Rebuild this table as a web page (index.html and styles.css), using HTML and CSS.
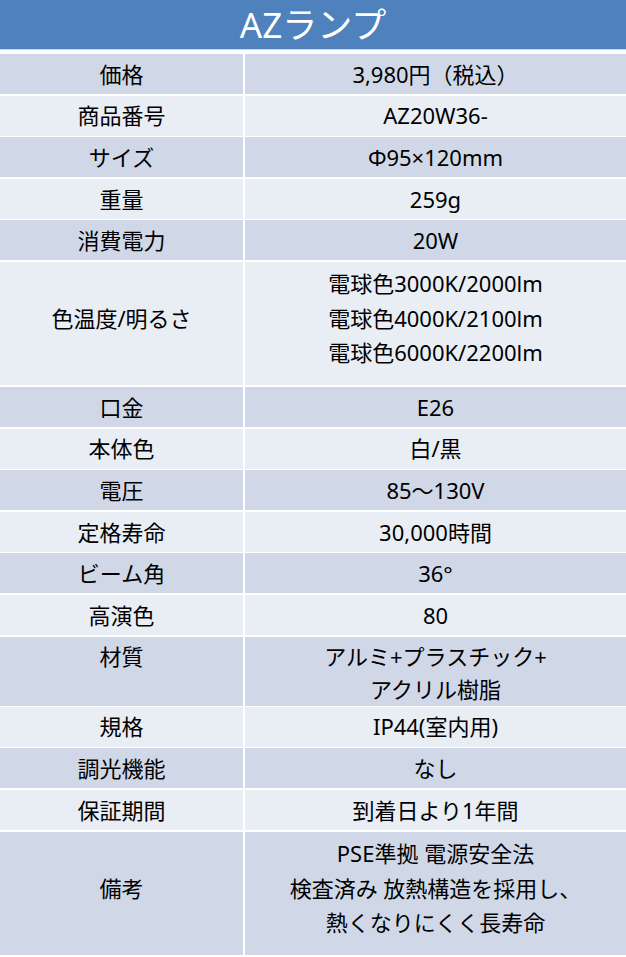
FILE: index.html
```html
<!DOCTYPE html>
<html lang="ja">
<head>
<meta charset="utf-8">
<title>AZランプ</title>
<link rel="stylesheet" href="styles.css">
</head>
<body>
<div class="sheet">
  <div class="title">AZランプ</div>
  <div class="spec">
    <div class="row dark"><div class="cell">価格</div><div class="cell">3,980円（税込）</div></div>
    <div class="row light"><div class="cell">商品番号</div><div class="cell">AZ20W36-</div></div>
    <div class="row dark"><div class="cell">サイズ</div><div class="cell">Φ95×120mm</div></div>
    <div class="row light"><div class="cell">重量</div><div class="cell">259g</div></div>
    <div class="row dark"><div class="cell">消費電力</div><div class="cell">20W</div></div>
    <div class="row light tall3"><div class="cell">色温度/明るさ</div><div class="cell">電球色3000K/2000lm<br>電球色4000K/2100lm<br>電球色6000K/2200lm</div></div>
    <div class="row dark"><div class="cell">口金</div><div class="cell">E26</div></div>
    <div class="row light"><div class="cell">本体色</div><div class="cell">白/黒</div></div>
    <div class="row dark"><div class="cell">電圧</div><div class="cell">85～130V</div></div>
    <div class="row light"><div class="cell">定格寿命</div><div class="cell">30,000時間</div></div>
    <div class="row dark"><div class="cell">ビーム角</div><div class="cell">36°</div></div>
    <div class="row light"><div class="cell">高演色</div><div class="cell">80</div></div>
    <div class="row dark tall2"><div class="cell top">材質</div><div class="cell top">アルミ+プラスチック+<br>アクリル樹脂</div></div>
    <div class="row light"><div class="cell">規格</div><div class="cell">IP44(室内用)</div></div>
    <div class="row dark"><div class="cell">調光機能</div><div class="cell">なし</div></div>
    <div class="row light"><div class="cell">保証期間</div><div class="cell">到着日より1年間</div></div>
    <div class="row dark tall3"><div class="cell">備考</div><div class="cell">PSE準拠 電源安全法<br>検査済み 放熱構造を採用し、<br>熱くなりにくく長寿命</div></div>
  </div>
</div>
</body>
</html>
```
FILE: styles.css
```css
html, body {
  margin: 0;
  padding: 0;
  background: #ffffff;
}
.sheet {
  width: 626px;
  height: 957px;
  overflow: hidden;
  font-family: "Noto Sans", "Noto Sans CJK JP", sans-serif;
  color: #000;
}
.title {
  height: 49px;
  background: #4f81bd;
  color: #fff;
  font-size: 35px;
  line-height: 49px;
  text-align: center;
  border-bottom: 1px solid #c9d7ea;
}
.spec {
  margin-top: 4px;
  display: flex;
  flex-direction: column;
  gap: 1.6px;
}
.row {
  display: grid;
  grid-template-columns: 243px 1fr;
  column-gap: 2px;
  height: 40px;
  background: #fff;
}
.row.tall3 { height: 123.5px; }
.row.tall2 { height: 68.5px; }
.cell {
  display: flex;
  align-items: center;
  justify-content: center;
  text-align: center;
  font-size: 22px;
  line-height: 34.5px;
}
.tall3 .cell { padding-bottom: 11px; }
.dark .cell { background: #d0d8e8; }
.light .cell { background: #e9edf4; }
.cell.top { align-items: flex-start; line-height: 33px; padding-top: 3px; }
```
